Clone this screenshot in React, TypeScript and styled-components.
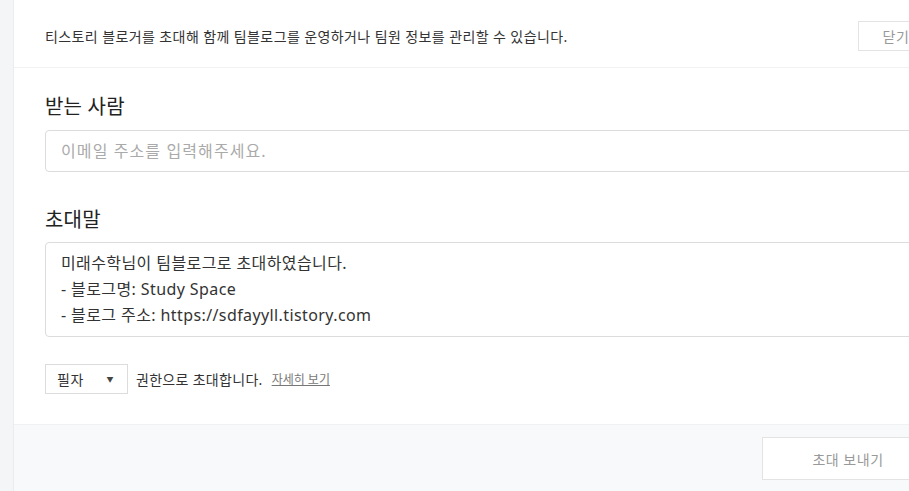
import React from "react";
import styled, { createGlobalStyle } from "styled-components";

const GlobalStyle = createGlobalStyle`
  html, body {
    margin: 0;
    padding: 0;
    overflow: hidden;
    background: #f4f5f7;
  }
  body {
    font-family: "Noto Sans", "Noto Sans CJK KR", sans-serif;
    color: #333;
  }
`;

const Page = styled.div`
  display: flex;
  height: 491px;
  width: 980px;
`;

const Gutter = styled.div`
  width: 13px;
  flex-shrink: 0;
  background: #f4f5f7;
  border-right: 1px solid #ebecef;
`;

const Panel = styled.div`
  width: 920px;
  flex-shrink: 0;
  display: flex;
  flex-direction: column;
  background: #fff;
`;

const Header = styled.div`
  height: 68px;
  box-sizing: border-box;
  padding: 4px 0 0 31px;
  display: flex;
  align-items: center;
  justify-content: space-between;
  border-bottom: 1px solid #f2f2f2;
`;

const Intro = styled.p`
  margin: 0;
  font-size: 14px;
  color: #333;
  letter-spacing: 0.4px;
`;

const GhostButton = styled.button<{ $w: number; $h: number; $size: number }>`
  width: ${(p) => p.$w}px;
  height: ${(p) => p.$h}px;
  background: #fff;
  border: 1px solid #e3e3e3;
  color: ${(p) => (p.$size > 13 ? "#999" : "#555")};
  font-family: inherit;
  font-size: ${(p) => p.$size}px;
  letter-spacing: 0.5px;
  padding: 0;
  cursor: pointer;
`;

const Body = styled.div`
  flex: 1;
  padding: 25px 0 0 31px;
  display: flex;
  flex-direction: column;
`;

const Label = styled.h2<{ $top?: number; $bottom: number }>`
  margin: ${(p) => p.$top ?? 0}px 0 ${(p) => p.$bottom}px;
  font-size: 20px;
  line-height: 28px;
  font-weight: 400;
  color: #222;
  letter-spacing: 0.2px;
`;

const EmailInput = styled.input`
  box-sizing: border-box;
  height: 42px;
  width: 100%;
  border: 1px solid #dcdcdc;
  border-radius: 4px;
  padding: 0 15px;
  font-family: inherit;
  font-size: 16px;
  letter-spacing: 1.1px;
  color: #333;
  outline: none;
  &::placeholder {
    color: #aaa;
  }
`;

const Message = styled.div`
  box-sizing: border-box;
  height: 95px;
  border: 1px solid #dcdcdc;
  border-radius: 4px;
  padding: 7px 15px;
  font-size: 16px;
  line-height: 26px;
  letter-spacing: 0.4px;
  color: #333;
`;

const RoleRow = styled.div`
  margin: 27px 0 30px;
  display: flex;
  align-items: center;
  gap: 8px;
`;

const RoleSelect = styled.div`
  box-sizing: border-box;
  width: 83px;
  height: 30px;
  border: 1px solid #dcdcdc;
  display: flex;
  align-items: center;
  justify-content: space-between;
  padding: 0 13px 0 11px;
  font-size: 14px;
  letter-spacing: 0.5px;
  color: #333;
`;

const Caret = styled.span`
  font-size: 7px;
  color: #444;
`;

const RoleText = styled.span`
  font-size: 14px;
  letter-spacing: 0.3px;
  color: #333;
`;

const More = styled.a`
  font-size: 12px;
  color: #777;
  text-decoration: underline;
  margin-left: 1px;
`;

const Footer = styled.div`
  background: #f8f9fa;
  border-top: 1px solid #f0f1f3;
  padding: 12px 0 0;
  height: 67px;
  box-sizing: border-box;
  display: flex;
  justify-content: flex-end;
`;

export default function App() {
  return (
    <>
      <GlobalStyle />
      <Page>
        <Gutter />
        <Panel>
          <Header>
            <Intro>티스토리 블로거를 초대해 함께 팀블로그를 운영하거나 팀원 정보를 관리할 수 있습니다.</Intro>
            <GhostButton $w={76} $h={30} $size={14}>
              닫기
            </GhostButton>
          </Header>
          <Body>
            <Label $bottom={9}>받는 사람</Label>
            <EmailInput placeholder="이메일 주소를 입력해주세요." />
            <Label $top={34} $bottom={8}>
              초대말
            </Label>
            <Message>
              미래수학님이 팀블로그로 초대하였습니다.
              <br />- 블로그명: Study Space
              <br />- 블로그 주소: https://sdfayyll.tistory.com
            </Message>
            <RoleRow>
              <RoleSelect>
                <span>필자</span>
                <Caret>▼</Caret>
              </RoleSelect>
              <RoleText>권한으로 초대합니다.</RoleText>
              <More>자세히 보기</More>
            </RoleRow>
          </Body>
          <Footer>
            <GhostButton $w={172} $h={43} $size={14}>
              초대 보내기
            </GhostButton>
          </Footer>
        </Panel>
      </Page>
    </>
  );
}
